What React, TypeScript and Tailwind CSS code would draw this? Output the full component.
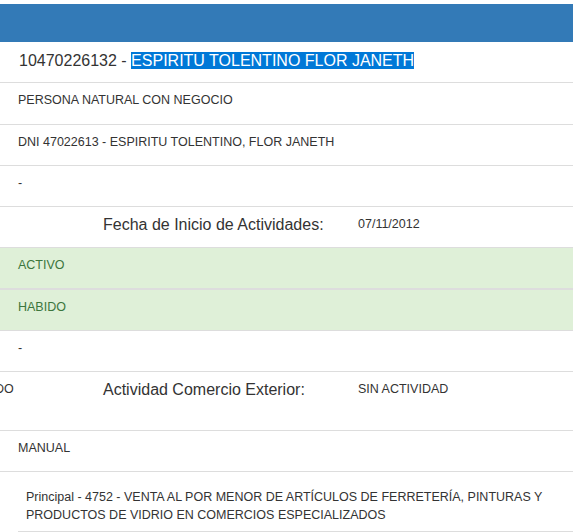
const rows = [
  { text: "PERSONA NATURAL CON NEGOCIO", h: "h-[42px]" },
  { text: "DNI 47022613 - ESPIRITU TOLENTINO, FLOR JANETH", h: "h-[41px]" },
  { text: "-", h: "h-[41px]" },
]

function Cell({ children }: { children: React.ReactNode }) {
  return <p className="text-[12.5px] leading-[18px]">{children}</p>
}

export default function App() {
  return (
    <div className="w-[573px] h-[532px] overflow-hidden bg-white pt-1 font-['Liberation_Sans',Arial,sans-serif] text-[#333]">
      {/* panel heading */}
      <div className="h-[38px] bg-[#337ab7]"></div>

      <div className="h-[41px] border-b border-[#ddd] pl-[19px] pt-[9px]">
        <h4 className="text-[16px] leading-[20px]">
          10470226132 -{" "}
          <span className="bg-[#0078d7] text-white">ESPIRITU TOLENTINO FLOR JANETH</span>
        </h4>
      </div>

      {rows.map((row, idx) => (
        <div key={idx} className={`${row.h} border-b border-[#ddd] pl-[18px] pt-[8px]`}>
          <Cell>{row.text}</Cell>
        </div>
      ))}

      <div className="h-[41px] border-b border-[#ddd] pt-[8px] grid grid-cols-[103px_255px_1fr] items-start">
        <div></div>
        <h4 className="text-[16px] leading-[20px]">Fecha de Inicio de Actividades:</h4>
        <Cell>07/11/2012</Cell>
      </div>

      <div className="h-[42px] border-b-2 border-[#ddd] bg-[#dff0d8] text-[#3c763d] pl-[18px] pt-[8px]">
        <Cell>ACTIVO</Cell>
      </div>
      <div className="h-[41px] border-b border-[#ddd] bg-[#dff0d8] text-[#3c763d] pl-[18px] pt-[8px]">
        <Cell>HABIDO</Cell>
      </div>

      <div className="h-[41px] border-b border-[#ddd] pl-[18px] pt-[8px]">
        <Cell>-</Cell>
      </div>

      <div className="h-[59px] border-b border-[#ddd] pt-[8px] grid grid-cols-[103px_255px_1fr] items-start">
        {/* left value column, cut at the page edge */}
        <div className="overflow-hidden">
          <div className="-ml-[5px]">
            <Cell>DO</Cell>
          </div>
        </div>
        <h4 className="text-[16px] leading-[20px]">Actividad Comercio Exterior:</h4>
        <Cell>SIN ACTIVIDAD</Cell>
      </div>

      <div className="h-[41px] border-b border-[#ddd] pl-[18px] pt-[8px]">
        <Cell>MANUAL</Cell>
      </div>

      <div className="pl-[18px]">
        <div className="h-[60px] border-b border-[#ddd] pl-[8px] pr-[10px] pt-[16px]">
          <Cell>
            Principal - 4752 - VENTA AL POR MENOR DE ARTÍCULOS DE FERRETERÍA, PINTURAS Y PRODUCTOS DE
            VIDRIO EN COMERCIOS ESPECIALIZADOS
          </Cell>
        </div>
      </div>
    </div>
  )
}
